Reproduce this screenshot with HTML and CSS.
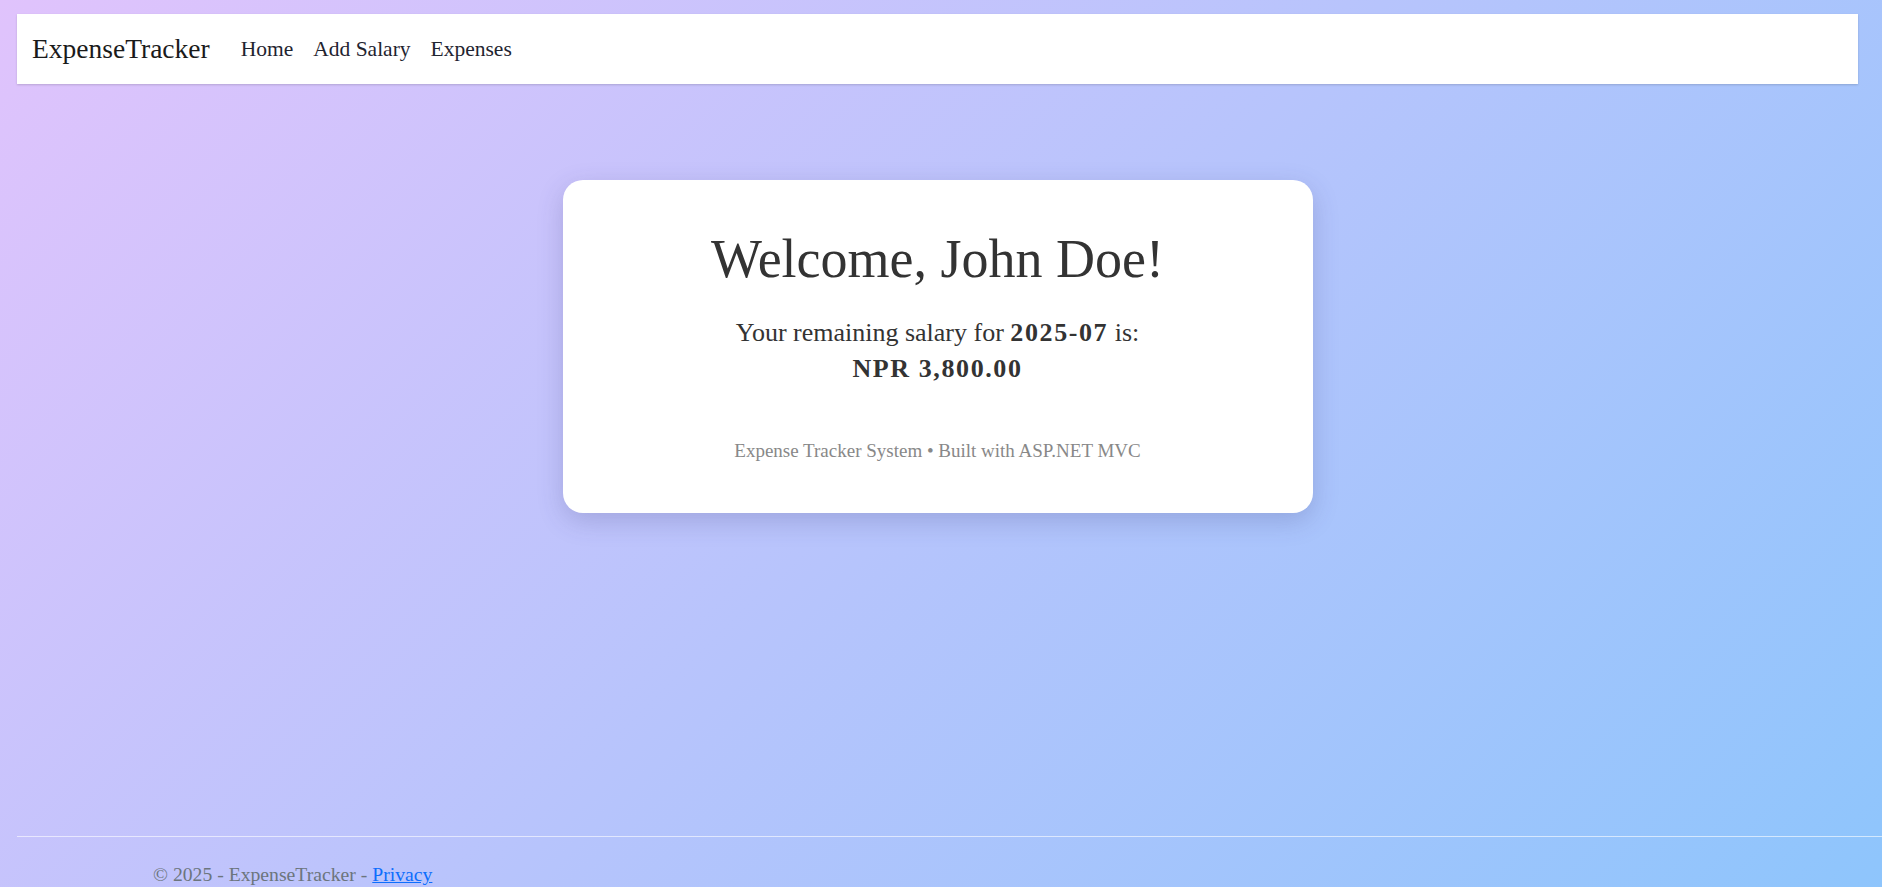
FILE: index.html
```html
<!DOCTYPE html>
<html lang="en">
<head>
<meta charset="utf-8">
<title>Home - ExpenseTracker</title>
<link rel="stylesheet" href="styles.css">
</head>
<body>
<div class="page">
  <header class="navbar">
    <a class="brand" href="#">ExpenseTracker</a>
    <nav class="nav">
      <a class="nav-link" href="#">Home</a>
      <a class="nav-link" href="#">Add Salary</a>
      <a class="nav-link" href="#">Expenses</a>
    </nav>
  </header>
  <main class="main">
    <section class="card">
      <h1 class="title">Welcome, John Doe!</h1>
      <p class="summary">Your remaining salary for <strong class="strong">2025-07</strong> is:<br><strong class="strong">NPR 3,800.00</strong></p>
      <p class="note">Expense Tracker System • Built with ASP.NET MVC</p>
    </section>
  </main>
  <footer class="footer">
    <div class="footer-text">© 2025 - ExpenseTracker - <a class="footer-link" href="#">Privacy</a></div>
  </footer>
</div>
</body>
</html>
```
FILE: styles.css
```css
html {
  margin: 0;
  min-height: 100%;
  background: linear-gradient(135deg, #e0c3fc 0%, #8ec5fc 100%);
}
body {
  margin: 0;
  min-height: 100vh;
  font-family: "Liberation Serif", "Times New Roman", serif;
  color: #212529;
  overflow: hidden;
}
.page {
  padding: 14px 24px 0 17px;
}
.navbar {
  height: 70px;
  background: #ffffff;
  box-shadow: 0 1px 2px rgba(0, 0, 0, 0.16);
  display: flex;
  align-items: center;
  padding-left: 15px;
  box-sizing: border-box;
}
.brand {
  font-size: 27.5px;
  line-height: 1.5;
  color: #1a1a1a;
  text-decoration: none;
  margin-right: 21px;
}
.nav {
  display: flex;
}
.nav-link {
  font-size: 21.5px;
  line-height: 1.5;
  padding: 0 10px;
  color: #1f2430;
  text-decoration: none;
}
.main {
  padding-top: 96px;
  min-height: 752px;
  box-sizing: border-box;
}
.card {
  width: 750px;
  height: 333px;
  box-sizing: border-box;
  margin: 0 auto;
  background: #ffffff;
  border-radius: 20px;
  box-shadow: 0 8px 26px rgba(60, 60, 120, 0.22);
  padding: 47px 40px 0;
  text-align: center;
}
.title {
  margin: 0 0 23px;
  font-size: 54px;
  line-height: 1.2;
  font-weight: 400;
  color: #333333;
}
.summary {
  margin: 0;
  font-size: 26px;
  line-height: 36px;
  color: #333333;
}
.strong {
  font-weight: 700;
  letter-spacing: 1.6px;
}
.note {
  margin: 50px 0 0;
  font-size: 19px;
  line-height: 1.5;
  color: #888888;
}
.footer {
  margin-right: -24px;
  border-top: 1px solid rgba(255, 255, 255, 0.6);
  padding: 23px 0 0 136px;
}
.footer-text {
  font-size: 19.7px;
  line-height: 1.5;
  color: #6c757d;
  white-space: nowrap;
}
.footer-link {
  color: #0d6efd;
  text-decoration: underline;
}
```
